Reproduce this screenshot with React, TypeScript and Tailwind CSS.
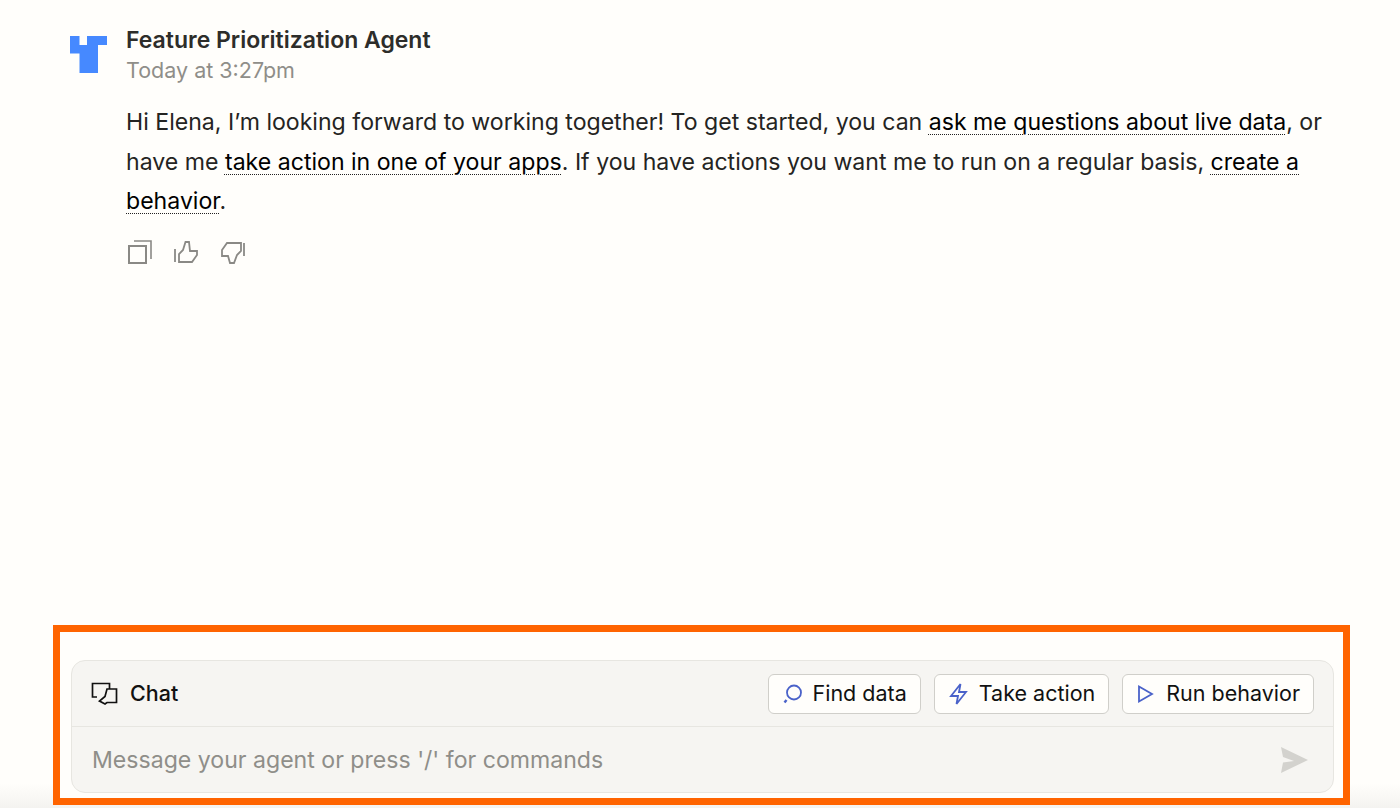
import type { ReactNode } from 'react';
import { Zap } from 'lucide-react';

function Logo() {
  return (
    <svg width="37" height="37" viewBox="0 0 37 37" className="block">
      <path d="M0 0H9.5V9H17V0H37V9H28V37H9.5V17.5H0Z" fill="#4689ff" />
    </svg>
  );
}

function CopyIcon() {
  return (
    <svg width="24" height="24" viewBox="0 0 24 24" fill="none" stroke="#8a8985" strokeWidth="2" className="block">
      <path d="M1 6H18V23H1Z" />
      <path d="M6 1H23V19" strokeWidth="1.6" />
    </svg>
  );
}

function ThumbUpIcon() {
  return (
    <svg width="26" height="24" viewBox="0 0 26 24" fill="none" stroke="#8a8985" strokeWidth="1.8" className="block">
      <path d="M2 9V22" />
      <path d="M6 22H19L24 15V11H17L16 2H12.5L10 10L6 14Z" />
    </svg>
  );
}

function ThumbDownIcon() {
  return (
    <svg width="26" height="24" viewBox="0 0 26 24" fill="none" stroke="#8a8985" strokeWidth="1.8" className="block">
      <path d="M24 3V16" />
      <path d="M21 3H7L2 10V16H8L10 23H14L17 15L21 11Z" />
    </svg>
  );
}

function ChatIcon() {
  return (
    <svg width="27" height="24" viewBox="0 0 27 24" fill="none" stroke="#111" strokeWidth="1.7" className="block">
      <path d="M6 15H1.5V1.5H18.5V7" />
      <path d="M16 7H25.5V20.5H16L14 22L8.5 19L14 14.5L16 7Z" />
    </svg>
  );
}

function SearchIcon() {
  return (
    <svg width="22" height="22" viewBox="0 0 22 22" fill="none" stroke="#4a62c9" strokeWidth="1.8" className="block">
      <circle cx="13" cy="9.5" r="7" />
      <path d="M5.5 17L3.5 19.5" strokeWidth="2.4" />
    </svg>
  );
}

function BoltIcon() {
  return (
    <svg width="22" height="24" viewBox="0 0 22 24" fill="none" stroke="#4a62c9" strokeWidth="1.8" className="block">
      <path d="M13.5 2L4 14H11L9.5 22L19 10H12Z" />
    </svg>
  );
}

function PlayIcon() {
  return (
    <svg width="21" height="22" viewBox="0 0 21 22" fill="none" stroke="#4a62c9" strokeWidth="1.8" className="block">
      <path d="M4 3.5L17 11L4 18.5Z" />
    </svg>
  );
}

function SendIcon() {
  return (
    <svg width="27" height="26" viewBox="0 0 27 26" className="block">
      <path d="M0 0L27 13L0 26L2 15.5L13 14L2 10Z" fill="#d3d2ce" />
    </svg>
  );
}

function TextLink({ children }: { children: ReactNode }) {
  return (
    <span className="text-black underline decoration-[#222] decoration-dotted decoration-1 underline-offset-[4px]">
      {children}
    </span>
  );
}

function ActionButton({ icon, label }: { icon: ReactNode; label: string }) {
  return (
    <button className="flex h-[40px] items-center gap-[10px] rounded-[6px] border border-[#d0cfca] bg-[#fffefb] pl-[12px] pr-[13px] text-[21.5px] text-[#111]">
      {icon}
      {label}
    </button>
  );
}

export default function App() {
  return (
    <div className="flex h-[808px] w-[1400px] flex-col overflow-hidden bg-linear-to-b from-[#fffefb] from-[97%] to-[#f4f3f0] font-['Inter',sans-serif]">
      {/* Message */}
      <div className="flex flex-1 gap-[19px] pl-[70px] pr-[70px] pt-[25px]">
        <div className="pt-[11px]">
          <Logo />
        </div>
        <div className="flex-1">
          <div className="text-[23px] font-semibold leading-[30px] text-[#2d2d2a]">Feature Prioritization Agent</div>
          <div className="text-[21.5px] leading-[31px] text-[#8f8e89]">Today at 3:27pm</div>
          <p className="mt-[17px] text-[23.1px] leading-[39.5px] text-[#242422]">
            Hi Elena, I’m looking forward to working together! To get started, you can{' '}
            <TextLink>ask me questions about live data</TextLink>, or have me{' '}
            <TextLink>take action in one of your apps</TextLink>. If you have actions you want me to run on a regular
            basis, <TextLink>create a behavior</TextLink>.
          </p>
          <div className="mt-[18px] flex items-center gap-[21px] pl-[2px]">
            <CopyIcon />
            <ThumbUpIcon />
            <ThumbDownIcon />
          </div>
        </div>
      </div>

      {/* Chat box, highlighted */}
      <div className="mb-[3px] ml-[53px] h-[180px] w-[1297px] border-[7px] border-[#ff6400] bg-[#fffefb] px-[11px] pt-[28px]">
        <div className="h-[133px] w-[1263px] rounded-[14px] border border-[#e7e6e1] bg-[#f6f5f2]">
          <div className="flex h-[66px] items-center justify-between border-b border-[#e7e6e1] pl-[19px] pr-[19px]">
            <div className="flex items-center gap-[12px] text-[21.5px] font-medium text-[#111]">
              <ChatIcon />
              Chat
            </div>
            <div className="flex gap-[13px]">
              <ActionButton icon={<SearchIcon />} label="Find data" />
              <ActionButton icon={<BoltIcon />} label="Take action" />
              <ActionButton icon={<PlayIcon />} label="Run behavior" />
            </div>
          </div>
          <div className="flex h-[66px] items-center justify-between pl-[20px] pr-[25px]">
            <span className="text-[23.1px] text-[#8f8e89]">Message your agent or press '/' for commands</span>
            <SendIcon />
          </div>
        </div>
      </div>
    </div>
  );
}
